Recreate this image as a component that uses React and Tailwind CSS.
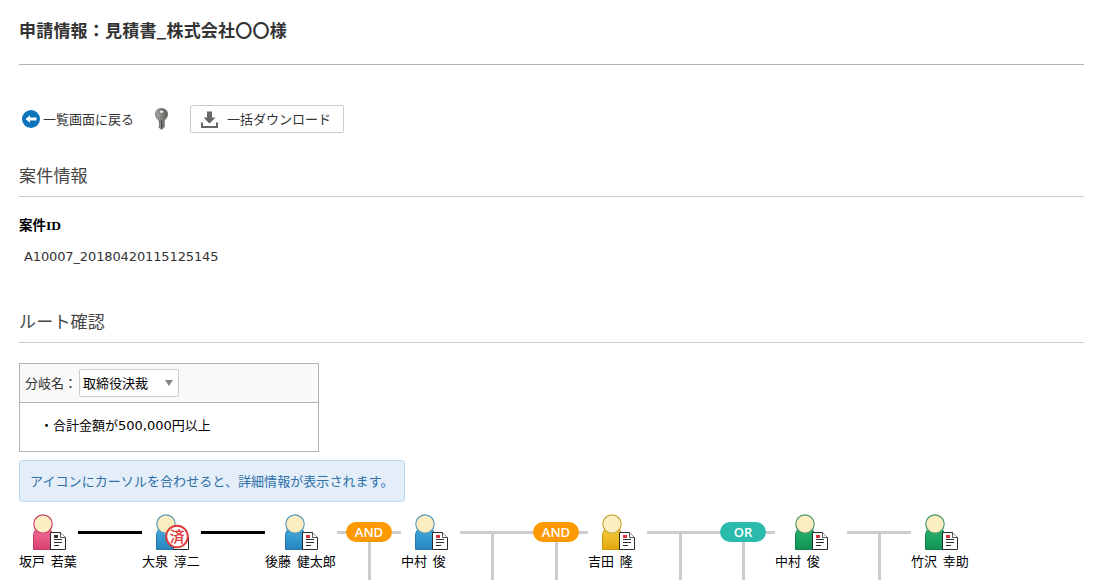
import React from "react";

const jp = "font-['Noto_Sans_CJK_JP','Noto_Sans',sans-serif]";
const jpLatin = "font-['DejaVu_Sans','Noto_Sans_CJK_JP',sans-serif]";

const PEOPLE = {
  pink: { head: "#c8436f", from: "#f4709b", to: "#d9406f", edge: "#c23a68" },
  blue: { head: "#5d9ab8", from: "#45ace0", to: "#2485bd", edge: "#2a78a8" },
  yellow: { head: "#cda93f", from: "#f7cf3c", to: "#e0a80f", edge: "#c99a10" },
  green: { head: "#4c9a6e", from: "#26b56f", to: "#129153", edge: "#128048" },
};

function PersonIcon({ color, mark = "#e0303c", done = false }) {
  const c = PEOPLE[color];
  const id = "grad-" + color;
  return (
    <svg width="33" height="36" viewBox="0 0 33 36" className="block">
      <defs>
        <linearGradient id={id} x1="0" y1="0" x2="0" y2="1">
          <stop offset="0" stopColor={c.from} />
          <stop offset="1" stopColor={c.to} />
        </linearGradient>
      </defs>
      <path d="M0.5 35.5V22C0.5 16.5 4 13.5 9 13.5h2C16.5 13.5 19.5 16.5 19.5 22V35.5Z" fill={"url(#" + id + ")"} stroke={c.edge} />
      <circle cx="10" cy="10" r="9.2" fill="#fdeec2" stroke={c.head} strokeWidth="1.2" />
      <path d="M17.5 18.5h10l5 5v12h-15Z" fill="#fff" stroke="#2b2b2b" strokeWidth="1" />
      <path d="M27.5 18.5v5h5" fill="#fff" stroke="#2b2b2b" strokeWidth="0.8" />
      <rect x="21" y="21" width="4" height="3" fill={mark} />
      <path d="M21 25.5h8M21 28.5h8M21 31.5h5" stroke="#2b2b2b" strokeWidth="1" />
      {done && (
        <g>
          <circle cx="21" cy="22.5" r="10.8" fill="#fff" stroke="#e03a3a" strokeWidth="2" />
          <text x="21" y="28" textAnchor="middle" fontSize="15" fontWeight="500" fill="#e03a3a" fontFamily="'Noto Sans CJK JP',sans-serif">済</text>
        </g>
      )}
    </svg>
  );
}

function Node({ name, width, color, mark, done }) {
  return (
    <div className="flex flex-col shrink-0" style={{ width }}>
      <div className="flex justify-center h-[36px] pl-[1px]">
        <PersonIcon color={color} mark={mark} done={done} />
      </div>
      <div className={`${jp} mt-[1px] text-[13px] leading-[20px] text-black whitespace-pre`}>{name}</div>
    </div>
  );
}

function BlackLine() {
  return (
    <div className="w-16 shrink-0 pt-[17px]">
      <div className="h-[3px] bg-black" />
    </div>
  );
}

function Branch({ label, badge, stem = "ml-[31px]" }) {
  return (
    <div className="relative w-16 shrink-0 flex flex-col pt-[17px]">
      <div className="h-[3px] w-full bg-[#cccccc]" />
      <div className={`w-[3px] flex-1 bg-[#cccccc] ${stem}`} />
      {label && (
        <div className={`absolute left-[9px] top-[8px] w-[46px] h-[20px] rounded-[10px] ${badge} text-white text-[13px] leading-[21px] font-semibold text-center font-['Open_Sans',sans-serif]`}>
          {label}
        </div>
      )}
    </div>
  );
}

function BackIcon() {
  return (
    <svg width="18" height="18" viewBox="0 0 18 18" className="block">
      <circle cx="9" cy="9" r="9" fill="#0c74bb" />
      <path d="M3.5 9 8 5.2v2.4h6.5v2.8H8v2.4Z" fill="#fff" />
    </svg>
  );
}

function KeyIcon() {
  return (
    <svg width="13" height="22" viewBox="0 0 13 22" className="block">
      <defs>
        <linearGradient id="keyfill" x1="0" y1="0" x2="1" y2="0">
          <stop offset="0" stopColor="#a8a8a3" />
          <stop offset="1" stopColor="#5f5f5b" />
        </linearGradient>
      </defs>
      <path d="M6.5 0.5C10 0.5 12.5 2.6 12.5 6c0 2.8-1.4 5-3.2 6.2V19l-2.6 2.6L4 19.4v-1.6l1-.9-1-.9 1-.9-1-.9v-1.9C2 11 0.5 8.8 0.5 6 0.5 2.6 3 .5 6.5.5Z" fill="url(#keyfill)" stroke="#5a5a5a" strokeWidth="0.7" />
      <ellipse cx="6.5" cy="3.8" rx="1.9" ry="1.5" fill="#fff" stroke="#555" strokeWidth="0.5" />
      <path d="M6.5 12v8" stroke="#444" strokeWidth="1" />
    </svg>
  );
}

function DownloadIcon() {
  return (
    <svg width="17" height="17" viewBox="0 0 17 17" className="block">
      <path d="M6 0.5h5v6h3.5l-6 6-6-6H6Z" fill="#666" />
      <path d="M1 11.5v4.5h15v-4.5" fill="none" stroke="#666" strokeWidth="2" />
    </svg>
  );
}

function SectionTitle({ children }) {
  return (
    <div className={`${jp} border-b border-[#cccccc] text-[17px] leading-[24px] tracking-[0.2px] text-[#444444] pb-[9px]`}>
      {children}
    </div>
  );
}

export default function App() {
  return (
    <div className={`${jp} h-[580px] w-[1103px] overflow-hidden bg-white px-[19px] flex flex-col`}>
      <h1 className="pt-[17px] pb-[22px] text-[17px] leading-[25px] tracking-[0.2px] font-bold text-[#333333] border-b border-[#b3b3b3] whitespace-pre">
        申請情報：見積書_株式会社〇〇様
      </h1>

      <div className="mt-[40px] flex items-center h-[28px]">
        <a className="ml-[3px] flex items-center gap-[3px] text-[13px] text-[#333333]">
          <BackIcon />
          <span>一覧画面に戻る</span>
        </a>
        <span className="ml-[21px]">
          <KeyIcon />
        </span>
        <button className="ml-[22px] w-[154px] h-[28px] flex items-center gap-[9px] pl-[10px] rounded-[2px] border border-[#cccccc] bg-white text-[13px] text-[#333333]">
          <DownloadIcon />
          <span>一括ダウンロード</span>
        </button>
      </div>

      <div className="mt-[30px]">
        <SectionTitle>案件情報</SectionTitle>
      </div>

      <div className="mt-[19px] text-[13.5px] leading-[20px] font-bold text-black font-['Liberation_Serif','Noto_Sans_CJK_JP',serif]">案件ID</div>
      <div className="mt-[11px] pl-[5px] text-[13px] leading-[20px] tracking-[-0.125px] text-[#333333] font-['DejaVu_Sans',sans-serif]">A10007_20180420115125145</div>

      <div className="mt-[42px]">
        <SectionTitle>ルート確認</SectionTitle>
      </div>

      <div className="mt-[20px] w-[300px] h-[89px] border border-[#b3b3b3]">
        <div className="h-[39px] bg-[#f9f9f9] border-b border-[#b3b3b3] flex items-center pl-[5px] text-[13px] text-[#333333]">
          <span>分岐名：</span>
          <div className="ml-[2px] w-[100px] h-[28px] flex items-center justify-between pl-[3px] pr-[5px] bg-white border border-[#cccccc] rounded-[2px] text-black">
            <span>取締役決裁</span>
            <span className="w-0 h-0 border-x-[4px] border-x-transparent border-t-[6px] border-t-[#888888]" />
          </div>
        </div>
        <div className={`${jpLatin} pl-[20px] pt-[13px] text-[13px] leading-[20px] text-black`}>・合計金額が500,000円以上</div>
      </div>

      <div className="mt-[8px] w-[386px] h-[42px] flex items-center pl-[10px] rounded-[3px] border border-[#bcd8f0] bg-[#e3eef9] text-[13px] tracking-[0.07px] text-[#2f6fa8]">
        アイコンにカーソルを合わせると、詳細情報が表示されます。
      </div>

      <div className="mt-[12px] flex-1 flex">
        <Node name="坂戸  若葉" width={59} color="pink" mark="#333333" />
        <BlackLine />
        <Node name="大泉  淳二" width={59} color="blue" done />
        <BlackLine />
        <Node name="後藤  健太郎" width={72} color="blue" />
        <Branch label="AND" badge="bg-[#ff9900]" />
        <Node name="中村  俊" width={59} color="blue" />
        <Branch />
        <Branch label="AND" badge="bg-[#ff9900]" />
        <Node name="吉田  隆" width={59} color="yellow" />
        <Branch stem="ml-[32px]" />
        <Branch label="OR" badge="bg-[#2bbbad]" />
        <Node name="中村  俊" width={72} color="green" />
        <Branch />
        <Node name="竹沢  幸助" width={59} color="green" />
      </div>
    </div>
  );
}
